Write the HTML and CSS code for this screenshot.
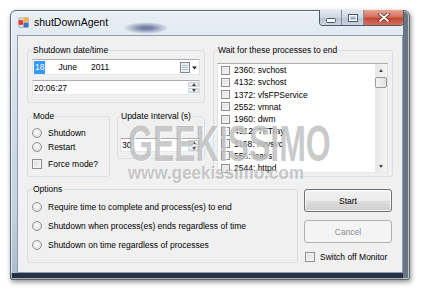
FILE: index.html
```html
<!DOCTYPE html>
<html lang="en">
<head>
    <meta charset="UTF-8">
    <title>shutDownAgent</title>
    <link rel="stylesheet" href="styles.css">
</head>
<body>
<div class="window">
    <!--title bar-->
    <div class="titlebar">
        <svg class="app-icon" width="11" height="11" viewBox="0 0 11 11">
            <rect x="1" y="1" width="9.5" height="9.5" fill="#dcdcdc" stroke="#9a9a9a" stroke-width="0.6"/>
            <rect x="5.6" y="0.6" width="4.6" height="4.2" fill="#f2b233"/>
            <rect x="0.5" y="3.2" width="4.6" height="4.6" fill="#e0392b"/>
            <rect x="5.6" y="5.6" width="4.6" height="4.6" fill="#3b6fd1"/>
        </svg>
        <span class="title">shutDownAgent</span>
        <div class="caption">
            <span class="cap cap-min">
                <svg width="10" height="5" viewBox="0 0 10 5"><rect x="0.5" y="0.5" width="9" height="4" rx="1" fill="#fff" stroke="#4b5766"/></svg>
            </span>
            <span class="cap cap-max">
                <svg width="10" height="8" viewBox="0 0 10 8"><rect x="0.5" y="0.5" width="9" height="7" fill="none" stroke="#4b5766"/><rect x="1.5" y="1.5" width="7" height="5" fill="none" stroke="#fff"/><rect x="3" y="3" width="4" height="2" fill="#9aa8b8"/></svg>
            </span>
            <span class="cap cap-close">
                <svg width="12" height="9" viewBox="0 0 12 9"><path d="M2 1 L10 8 M10 1 L2 8" stroke="#5a2a22" stroke-width="3.4" stroke-linecap="round"/><path d="M2 1 L10 8 M10 1 L2 8" stroke="#fff" stroke-width="1.8" stroke-linecap="round"/></svg>
            </span>
        </div>
    </div>

    <div class="client">
        <div class="top">
            <div class="leftcol">
                <fieldset class="group date-group">
                    <legend>Shutdown date/time</legend>
                    <div class="picker">
                        <span class="sel">18</span>
                        <span class="month">June</span>
                        <span class="year">2011</span>
                        <svg class="calendar" width="18" height="11" viewBox="0 0 18 11">
                            <rect x="0.5" y="0.5" width="9" height="10" fill="#eef0f2" stroke="#7d8590"/>
                            <path d="M2 3.5h6M2 5.5h6M2 7.5h6" stroke="#b7bec6"/>
                            <path d="M12 4.5h5l-2.5 3z" fill="#222"/>
                        </svg>
                    </div>
                    <div class="picker time">
                        <span class="val">20:06:27</span>
                        <div class="spin">
                            <span class="spin-btn"><i class="up"></i></span>
                            <span class="spin-btn"><i class="down"></i></span>
                        </div>
                    </div>
                </fieldset>
                <div class="midrow">
                    <fieldset class="group mode-group">
                        <legend>Mode</legend>
                        <label class="opt"><span class="rb"></span>Shutdown</label>
                        <label class="opt"><span class="rb"></span>Restart</label>
                        <label class="opt force"><span class="cb"></span>Force mode?</label>
                    </fieldset>
                    <fieldset class="group interval-group">
                        <legend>Update Interval (s)</legend>
                        <div class="numeric">
                            <span class="val">30</span>
                            <div class="spin">
                                <span class="spin-btn"><i class="up"></i></span>
                                <span class="spin-btn"><i class="down"></i></span>
                            </div>
                        </div>
                    </fieldset>
                </div>
            </div>

            <fieldset class="group wait-group">
                <legend>Wait for these processes to end</legend>
                <div class="listbox">
                    <ul class="items">
                        <li><span class="cb small"></span>2360: svchost</li>
                        <li><span class="cb small"></span>4132: svchost</li>
                        <li><span class="cb small"></span>1372: vfsFPService</li>
                        <li><span class="cb small"></span>2552: vmnat</li>
                        <li><span class="cb small"></span>1960: dwm</li>
                        <li><span class="cb small"></span>4912: TFTray</li>
                        <li><span class="cb small"></span>1168: nvvsvc</li>
                        <li><span class="cb small"></span>556: lsass</li>
                        <li><span class="cb small"></span>2544: httpd</li>
                    </ul>
                    <div class="scrollbar">
                        <span class="arrow"><i class="up"></i></span>
                        <span class="thumb"></span>
                        <span class="track"></span>
                        <span class="arrow"><i class="down"></i></span>
                    </div>
                </div>
            </fieldset>
        </div>

        <div class="bottom">
            <fieldset class="group options-group">
                <legend>Options</legend>
                <label class="opt"><span class="rb"></span>Require time to complete and process(es) to end</label>
                <label class="opt"><span class="rb"></span>Shutdown when process(es) ends regardless of time</label>
                <label class="opt"><span class="rb"></span>Shutdown on time regardless of processes</label>
            </fieldset>
            <div class="actions">
                <button class="btn">Start</button>
                <button class="btn" disabled>Cancel</button>
                <label class="opt monitor"><span class="cb"></span>Switch off Monitor</label>
            </div>
        </div>
    </div>

    <!--watermark of the screenshot-->
    <div class="watermark">
        <span class="wm-big">GEEKISSIMO</span>
        <span class="wm-url">www.geekissimo.com</span>
    </div>
</div>
</body>
</html>
```

FILE: styles.css
```css
*{
    margin: 0;
    padding: 0;
    box-sizing: border-box;
}
body{
    width: 421px;
    height: 292px;
    overflow: hidden;
    background: #fff;
    font-family: "Liberation Sans", Arial, sans-serif;
    font-size: 8.5px;
    color: #000;
}
/*window frame*/
.window{
    position: relative;
    margin: 10px 0 0 10px;
    width: 400px;
    height: 270px;
    padding: 0 6px 6px;
    border: 1px solid #5b6776;
    border-radius: 6px 6px 2px 2px;
    background: linear-gradient(to bottom, #e8eef4 0, #d5e0eb 30%, #c3d1df 75%, #aabbcd 100%);
    box-shadow: inset 0 0 0 1px rgba(255,255,255,.6),
                inset -6px 0 0 #6a7582,
                inset 0 -6px 0 #263246,
                1px 2px 5px rgba(0,0,0,.45);
}
.titlebar{
    position: relative;
    height: 24px;
    display: flex;
    align-items: flex-start;
}
.titlebar::after{
    content: "";
    position: absolute;
    left: 106px;
    top: 11px;
    width: 46px;
    height: 12px;
    background: radial-gradient(ellipse, rgba(40,55,110,.6) 15%, rgba(40,55,110,0) 70%);
}
.app-icon{
    margin: 6px 0 0 1px;
}
.title{
    margin: 5px 0 0 5px;
    font-size: 10.5px;
    line-height: 13px;
    color: #000;
    text-shadow: 0 0 4px #fff;
}
.caption{
    margin: -1px -1px 0 auto;
    display: flex;
    height: 16px;
    border: 1px solid #4e5a69;
    border-top: none;
    border-radius: 0 0 4px 4px;
    overflow: hidden;
}
.cap{
    display: flex;
    align-items: center;
    justify-content: center;
    height: 100%;
    background: linear-gradient(to bottom, #e3e9f0 0, #cdd7e2 50%, #b6c3d1 51%, #c9d4e0 100%);
}
.cap-min{
    width: 22px;
    border-right: 1px solid #7f8c9a;
    padding-top: 5px;
}
.cap-max{
    width: 22px;
    border-right: 1px solid #7f8c9a;
}
.cap-close{
    width: 39px;
    background: linear-gradient(to bottom, #e8a493 0, #d4705d 45%, #c24a36 55%, #d8715a 100%);
}
/*client area*/
.client{
    height: 238px;
    padding: 8px 9px 9px;
    border: 1px solid #8b9bb0;
    background: #f0f0f0;
}
.top{
    display: flex;
    gap: 8px;
    height: 133px;
}
.leftcol{
    width: 178px;
    display: flex;
    flex-direction: column;
    gap: 7px;
}
.midrow{
    display: flex;
    gap: 7px;
    align-items: flex-start;
}
.group{
    border: 1px solid #d5dfe5;
    border-radius: 3px;
    padding: 0 4px;
    min-width: 0;
}
.group legend{
    padding: 0 1px;
    line-height: 12px;
    font-size: 8.5px;
}
.date-group{
    height: 59px;
    padding-top: 3px;
}
.picker{
    display: flex;
    align-items: center;
    height: 16px;
    border: 1px solid;
    border-color: #abadb3 #dbdfe6 #e3e9ef #e2e3ea;
    background: #fff;
}
.picker .sel{
    background: #3399ff;
    color: #fff;
    padding: 0 1px;
    margin-left: 1px;
    line-height: 13px;
}
.picker .month{
    margin-left: 13px;
}
.picker .year{
    margin-left: 14px;
}
.picker .calendar{
    margin: 0 1px 0 auto;
}
.picker.time{
    margin-top: 5px;
    height: 15px;
}
.val{
    margin-left: 1px;
}
.spin{
    margin-left: auto;
    width: 11px;
    height: 100%;
    display: flex;
    flex-direction: column;
    gap: 1px;
    padding: 1px 0;
}
.spin-btn{
    flex: 1;
    display: flex;
    align-items: center;
    justify-content: center;
    border: 1px solid #c9ced4;
    border-radius: 1px;
    background: linear-gradient(to bottom, #f7f7f7, #e3e6ea);
}
.up, .down{
    width: 0;
    height: 0;
    border-left: 2.5px solid transparent;
    border-right: 2.5px solid transparent;
}
.up{
    border-bottom: 3px solid #4a4a4a;
}
.down{
    border-top: 3px solid #4a4a4a;
}
.mode-group{
    width: 83px;
    height: 67px;
    padding-top: 4px;
}
.opt{
    display: flex;
    align-items: center;
    height: 14px;
    white-space: nowrap;
}
.rb{
    width: 10px;
    height: 10px;
    margin-right: 6px;
    border: 1px solid #8e9194;
    border-radius: 50%;
    background: radial-gradient(circle at 45% 40%, #fbfbfb 0, #ececec 45%, #d2d4d6 100%);
}
.cb{
    width: 10px;
    height: 10px;
    margin-right: 6px;
    border: 1px solid #8f8f8f;
    background: linear-gradient(135deg, #dcdcdc 0, #f6f6f6 100%);
    box-shadow: inset 0 0 0 1px #f4f4f4;
}
.cb.small{
    width: 9px;
    height: 9px;
    margin-right: 4px;
}
.force{
    margin-top: 3px;
}
.interval-group{
    width: 88px;
    height: 49px;
    padding: 0 4px 0 2px;
}
.numeric{
    margin-top: 16px;
    display: flex;
    align-items: center;
    height: 14px;
    border: 1px solid;
    border-color: #abadb3 #dbdfe6 #e3e9ef #e2e3ea;
    background: #fff;
}
.wait-group{
    width: 180px;
    height: 133px;
    padding: 7px 4px 0 3px;
}
.listbox{
    display: flex;
    height: 110px;
    border: 1px solid;
    border-color: #abadb3 #dbdfe6 #e3e9ef #e2e3ea;
    background: #fff;
}
.items{
    flex: 1;
    list-style-type: none;
    padding-left: 3px;
}
.items li{
    display: flex;
    align-items: center;
    height: 12.25px;
    white-space: nowrap;
}
.scrollbar{
    width: 12px;
    display: flex;
    flex-direction: column;
    background: linear-gradient(to right, #e7e7e7, #f5f5f5);
}
.scrollbar .arrow{
    height: 12px;
    display: flex;
    align-items: center;
    justify-content: center;
}
.scrollbar .thumb{
    height: 11px;
    margin: 1px 0 0;
    border: 1px solid #979797;
    border-radius: 2px;
    background: linear-gradient(to right, #f4f4f4, #e1e1e1);
}
.scrollbar .track{
    flex: 1;
}
.bottom{
    display: flex;
    gap: 6px;
    margin-top: 6px;
}
.options-group{
    width: 271px;
    height: 80px;
    padding-top: 5px;
}
.options-group .opt{
    margin-bottom: 5px;
}
.actions{
    width: 88px;
    padding-top: 6px;
}
.btn{
    display: block;
    width: 88px;
    height: 23px;
    border: 1px solid #707070;
    border-radius: 3px;
    background: linear-gradient(to bottom, #f2f2f2 0, #ebebeb 50%, #dddddd 51%, #cfcfcf 100%);
    box-shadow: inset 0 0 0 1px rgba(255,255,255,.75);
    font-family: "Liberation Sans", Arial, sans-serif;
    font-size: 8.5px;
    color: #000;
}
.btn:disabled{
    margin-top: 8px;
    border-color: #adb2b5;
    background: #f4f4f4;
    box-shadow: none;
    color: #8a8a8a;
}
.monitor{
    margin: 7px 0 0 1px;
}
.monitor .cb{
    margin-right: 5px;
}
/*watermark*/
.watermark{
    position: absolute;
    left: 117px;
    top: 108px;
    width: 172px;
    color: rgba(150,150,150,.5);
    text-shadow: 1px 1px 0 rgba(255,255,255,.7);
    font-family: "Liberation Sans Narrow", "Liberation Sans", sans-serif;
    font-weight: bold;
    pointer-events: none;
}
.wm-big{
    display: block;
    font-size: 32px;
    line-height: 32px;
    transform: scaleY(1.55);
    transform-origin: left top;
}
.wm-url{
    display: block;
    margin-top: 14px;
    font-size: 17px;
    line-height: 16px;
    transform: scaleY(1.1);
    transform-origin: left top;
}
```
